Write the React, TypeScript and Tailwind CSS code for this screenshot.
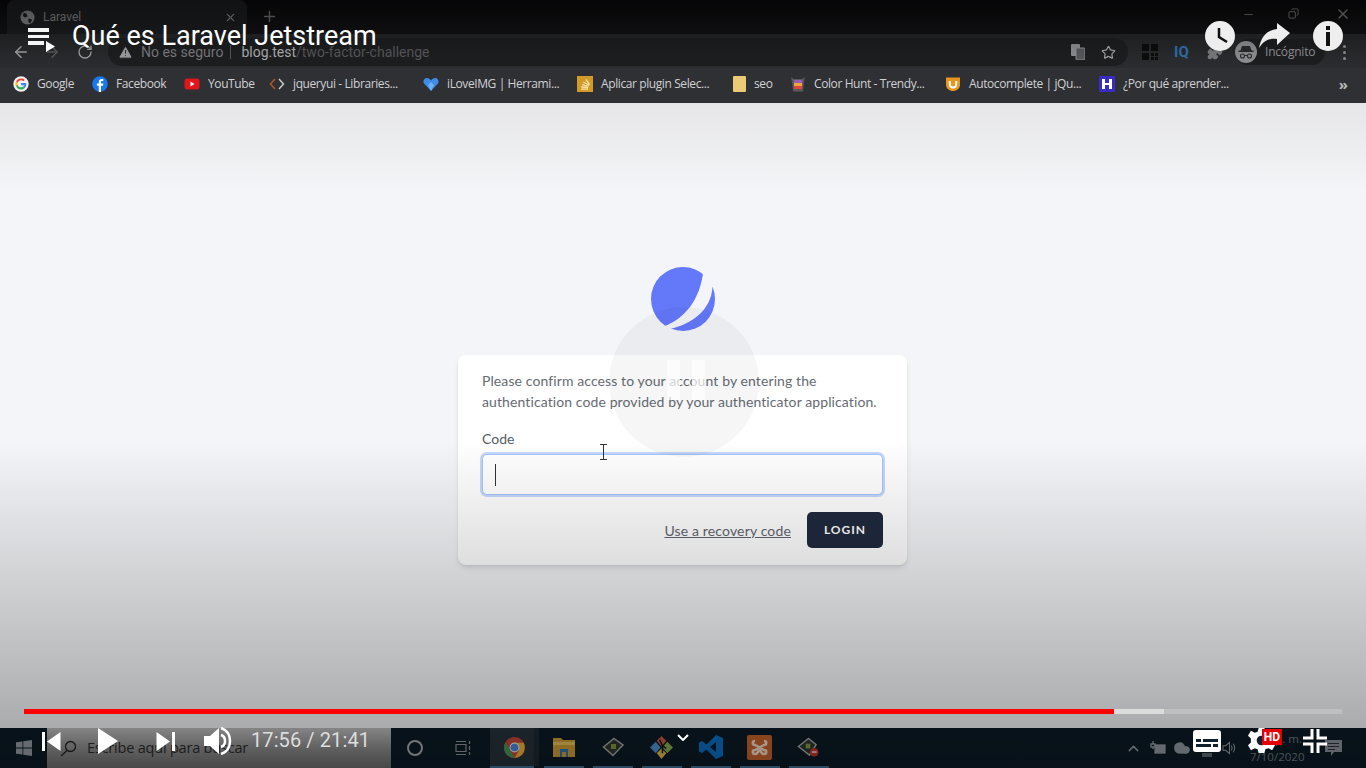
import { ArrowLeft, ArrowRight, RotateCw, Star, TriangleAlert, X, Plus, Minus, Copy, Puzzle, ChevronUp, Cloud } from 'lucide-react'

const bookmarks = [
  { label: 'Google', width: 'w-[39px]', gap: 'mr-4', icon: <GoogleIcon /> },
  { label: 'Facebook', width: 'w-[52px]', gap: 'mr-4', icon: <FacebookIcon /> },
  { label: 'YouTube', width: 'w-[46px]', gap: 'mr-[15px]', icon: <YoutubeIcon /> },
  { label: 'jqueryui - Libraries...', width: 'w-[108px]', gap: 'mr-[22px]', icon: <CodeIcon /> },
  { label: 'iLoveIMG | Herrami...', width: 'w-[110px]', gap: 'mr-5', icon: <HeartIcon /> },
  { label: 'Aplicar plugin Selec...', width: 'w-[114px]', gap: 'mr-[18px]', icon: <StackIcon /> },
  { label: 'seo', width: 'w-[19px]', gap: 'mr-[17px]', icon: <FolderIcon /> },
  { label: 'Color Hunt - Trendy...', width: 'w-[114px]', gap: 'mr-[17px]', icon: <HuntIcon /> },
  { label: 'Autocomplete | jQu...', width: 'w-[113px]', gap: 'mr-[17px]', icon: <ShieldIcon /> },
  { label: '¿Por qué aprender...', width: 'w-[106px]', gap: '', icon: <PurpleIcon /> },
]

function GoogleIcon() {
  return (
    <svg viewBox="0 0 48 48" className="w-4 h-4 shrink-0">
      <circle cx="24" cy="24" r="23" fill="#f1f1f1" />
      <path fill="#ea4335" d="M24 13c3 0 5.400 1 7.300 2.800l4-4C32.700 9 28.800 7.500 24 7.500c-6.500 0-12 3.700-14.700 9.100l4.700 3.600C15.300 16 19.300 13 24 13z" />
      <path fill="#4285f4" d="M39.800 24.400c0-1.200-.1-2.300-.3-3.400H24v6.500h8.900c-.4 2-1.500 3.800-3.300 5l5 3.900c2.900-2.700 5.200-6.800 5.200-12z" />
      <path fill="#fbbc05" d="M14 27.800c-.4-1.200-.6-2.500-.6-3.800s.2-2.600.6-3.800l-4.700-3.600C8.400 18.800 7.500 21.300 7.500 24s.9 5.200 1.800 7.400z" />
      <path fill="#34a853" d="M24 40.500c4.500 0 8.200-1.500 10.600-4.100l-5-3.900c-1.400.9-3.200 1.500-5.600 1.500-4.700 0-8.700-3-10-7.200l-4.700 3.600C12 36 17.500 40.500 24 40.500z" />
    </svg>
  )
}

function FacebookIcon() {
  return (
    <svg viewBox="0 0 16 16" className="w-4 h-4 shrink-0">
      <circle cx="8" cy="8" r="7.800" fill="#1877f2" />
      <path fill="#fff" d="M9 16V9.800h2l.3-2.300H9V6.200c0-.7.300-1.100 1.200-1.100h1.100V3.100C11 3 10.300 3 9.700 3 8 3 6.800 4 6.800 5.900v1.600H4.900v2.300h1.900V16z" />
    </svg>
  )
}

function YoutubeIcon() {
  return (
    <svg viewBox="0 0 16 16" className="w-4 h-4 shrink-0">
      <rect x="0.500" y="2.500" width="15" height="11" rx="3" fill="#e0161b" />
      <path fill="#fff" d="M6.500 5.500 10.500 8l-4 2.500z" />
    </svg>
  )
}

function CodeIcon() {
  return (
    <svg viewBox="0 0 16 16" className="w-4 h-4 shrink-0" fill="none" strokeWidth="1.500">
      <path d="M6 3 1.500 8 6 13" stroke="#b5532b" />
      <path d="M10 3l4.500 5-4.500 5" stroke="#c9c9cb" />
    </svg>
  )
}

function HeartIcon() {
  return (
    <svg viewBox="0 0 16 16" className="w-4 h-4 shrink-0">
      <path fill="#3f8be8" d="M8 15 1 7.500C-.3 5.500.8 2 3.800 2 5.600 2 7 3 8 4.500 9 3 10.400 2 12.200 2c3 0 4.100 3.500 2.800 5.500z" />
      <path fill="#6fb0f6" d="M8 15 5 9l3-3 3 3z" />
    </svg>
  )
}

function StackIcon() {
  return (
    <svg viewBox="0 0 16 16" className="w-4 h-4 shrink-0">
      <rect width="16" height="16" fill="#d29a28" />
      <path stroke="#f7e2a8" strokeWidth="1.300" fill="none" d="M4 13.200h7M4.300 11l6.800.6M5 8.700l6.500 1.700M6.400 6l5.700 3.200M9 3.500l3.700 5.200" />
    </svg>
  )
}

function FolderIcon() {
  return <div className="w-[13px] h-[16px] shrink-0 bg-[#ecc976] rounded-[1px]" />
}

function HuntIcon() {
  return (
    <svg viewBox="0 0 16 16" className="w-4 h-4 shrink-0">
      <path fill="#5a5a5e" d="M1 1l2.500 2h9L15 1l-1 5-1 9.500H3L2 6z" />
      <rect x="4" y="4" width="8" height="3" fill="#9a5fb0" />
      <rect x="4" y="7" width="8" height="3" fill="#f2a33a" />
      <rect x="4" y="10" width="8" height="3" fill="#e0483e" />
    </svg>
  )
}

function ShieldIcon() {
  return (
    <svg viewBox="0 0 16 16" className="w-4 h-4 shrink-0">
      <path fill="#e8951e" d="M1 1.500h14V9c0 3.500-3.500 6-7 6S1 12.500 1 9z" />
      <path stroke="#fff" strokeWidth="2" fill="none" d="M4.800 5v3.500c0 1.800 1.400 3 3.200 3s3.200-1.200 3.200-3V5" />
    </svg>
  )
}

function PurpleIcon() {
  return (
    <svg viewBox="0 0 16 16" className="w-4 h-4 shrink-0">
      <rect width="16" height="16" rx="1" fill="#3a2bc4" />
      <path fill="#fff" d="M3 3h3v4h4V3h3v10h-3V9H6v4H3z" />
    </svg>
  )
}

function BrandLogo() {
  return (
    <svg viewBox="0 0 64 64" className="w-16 h-16">
      <circle cx="32" cy="32" r="32" fill="#6478fa" />
      <path fill="#f4f5f8" d="M53 0 66 18 61.500 20C60 44 40 57 20 61.700L19 66 10 60 14.500 58.800C28 53 47 40 52 6.700z" />
    </svg>
  )
}

function TaskApp({ active, children }: { active?: boolean; children: React.ReactNode }) {
  return (
    <div className="w-[49px] flex flex-col items-center">
      <div className={`w-full flex-1 flex items-center justify-center ${active ? 'bg-[linear-gradient(90deg,#27333c_90%,#1d2932_90%)]' : ''}`}>{children}</div>
      <div className={`h-[2px] ${active ? 'w-[44px] self-start' : 'w-[40px]'} bg-[#3f6e94]`} />
    </div>
  )
}

function Taskbar() {
  return (
    <div className="h-10 shrink-0 flex items-stretch bg-[#0c1a25] text-[#c9cdd1]">
      <div className="w-[47px] flex items-center justify-center">
        <svg viewBox="0 0 16 16" className="w-4 h-4 opacity-70" fill="#d0d4d8">
          <path d="M0 2.300 6.500 1.400v6.200H0zM7.300 1.300 16 0v7.600H7.300zM0 8.400h6.500v6.200L0 13.700zM7.300 8.400H16V16l-8.700-1.300z" />
        </svg>
      </div>
      <div className="w-[344px] flex items-center pl-[13px] gap-[10px] bg-[linear-gradient(#bdbdbd,#8a8a8a_55%,#6e6e6e)]">
        <svg viewBox="0 0 17 17" className="w-[17px] h-[17px]" fill="none" stroke="#222" strokeWidth="1.300">
          <circle cx="10.500" cy="6.500" r="5" />
          <path d="M7 10.500 1 16" />
        </svg>
        <span className="text-[14.500px] font-[Open_Sans,sans-serif] tracking-[-0.200px] text-[#2b2b2b]">Escribe aquí para buscar</span>
      </div>
      <div className="w-[99px] flex items-center pl-[16px] gap-[32px]">
        <div className="w-[16px] h-[16px] rounded-full border-2 border-[#a8adb1]" />
        <svg viewBox="0 0 17 16" className="w-[17px] h-4" fill="none" stroke="#8f969b" strokeWidth="1.200">
          <path d="M1 4.500h10v7H1zM1 1.500h10M1 14.500h10M14.500 1v3M14.500 6v4M14.500 12v3" />
        </svg>
      </div>
      <TaskApp active>
        <svg viewBox="0 0 24 24" className="w-[23px] h-[23px] -ml-[1px]">
          <circle cx="12" cy="12" r="11" fill="#c9443a" />
          <path fill="#3f9a57" d="M2.500 6.500 8 16l4 7a11 11 0 0 1-9.500-16.500z" />
          <path fill="#e9b43c" d="M12 7h9.500A11 11 0 0 1 12 23l5-8.500z" />
          <circle cx="12" cy="12" r="5.200" fill="#e4e4e4" />
          <circle cx="12" cy="12" r="4" fill="#4a86dd" />
        </svg>
      </TaskApp>
      <TaskApp>
        <svg viewBox="0 0 22 20" className="w-[22px] h-[20px]">
          <path fill="#cf9d34" d="M0 1h8l2 2h12v17H0z" />
          <path fill="#e6c25c" d="M0 5h22v3H0z" />
          <rect x="7" y="12" width="8" height="8" fill="#2a76b8" />
          <rect x="9" y="15" width="4" height="5" fill="#cf9d34" />
        </svg>
      </TaskApp>
      <TaskApp>
        <svg viewBox="0 0 22 20" className="w-[22px] h-[20px]">
          <path fill="#2e352f" stroke="#a4a8a2" strokeWidth="1.500" d="M12 1.500 21 8 11 18.500 1.500 10z" />
          <rect x="9" y="7" width="5" height="5" fill="#7f9640" />
        </svg>
      </TaskApp>
      <TaskApp>
        <svg viewBox="0 0 24 24" className="w-[23px] h-[23px]">
          <path fill="#c9564a" d="M12 0l5 5-5 6-5-6z" />
          <path fill="#4f8fd0" d="M6 6l5 6-5 6-6-6z" />
          <path fill="#84ad50" d="M18 6l6 6-6 6-5-6z" />
          <path fill="#e0b84a" d="M12 13l5 5-5 6-5-6z" />
          <path fill="none" stroke="#111" strokeWidth="1.500" d="M10 4l3 6v8M13 10l4 3" />
        </svg>
      </TaskApp>
      <TaskApp>
        <svg viewBox="0 0 24 24" className="w-[24px] h-[24px]">
          <path fill="#0a6fc2" d="M17 0l7 3v18l-7 3-9.500-9.500L3 18l-3-1.500v-9L3 6l4.500 3.500z" />
          <path fill="#0c1a25" d="M17 7 11 12l6 5z" />
        </svg>
      </TaskApp>
      <TaskApp>
        <svg viewBox="0 0 25 25" className="w-[25px] h-[25px]">
          <rect width="25" height="25" rx="2" fill="#c7622c" />
          <path fill="none" stroke="#f2dcc8" strokeWidth="2.500" d="M8 6c-3 0-3 4 0 4l9 5c3 0 3 4 0 4s-3-3-4.500-4.500M17 6c3 0 3 4 0 4l-9 5c-3 0-3 4 0 4s3-3 4.500-4.500" />
        </svg>
      </TaskApp>
      <TaskApp>
        <svg viewBox="0 0 24 22" className="w-[23px] h-[21px]">
          <path fill="#2e352f" stroke="#a4a8a2" strokeWidth="1.500" d="M12 1.500 20 8 13 19 1.500 10z" />
          <rect x="9" y="7" width="5" height="5" fill="#7f9640" />
          <circle cx="18" cy="16" r="4.500" fill="#c2332e" />
          <rect x="15.500" y="15" width="5" height="1.500" fill="#eee" />
        </svg>
      </TaskApp>
      <div className="flex-1 flex items-center justify-end pr-[24px] text-[#929ba2]">
        <ChevronUp className="w-[17px] h-[17px]" />
        <svg viewBox="0 0 16 14" className="ml-[8px] w-[16px] h-[14px]" fill="none" stroke="#929ba2" strokeWidth="1.300">
          <path d="M3 0v3M1 3h4v3H1zM3 6v2" />
          <rect x="5" y="4" width="10" height="8" fill="#929ba2" />
        </svg>
        <Cloud className="ml-[7px] w-[18px] h-[18px]" fill="#929ba2" strokeWidth={1} />
        <div className="ml-[11px] w-[10px] h-[4px] mt-[14px] bg-[#5e6a72]" />
        <svg viewBox="0 0 16 16" className="ml-[10px] w-[15px] h-[16px]" fill="none" stroke="#929ba2" strokeWidth="1.100">
          <path d="M1 5.500h3l4-3.500v12l-4-3.500H1zM10 5.500c1 1.500 1 3.500 0 5M12 3.500c2 2.500 2 6.500 0 9" />
        </svg>
        <div className="ml-[13px] w-[52px] text-right whitespace-nowrap text-[11.500px] font-[Open_Sans,sans-serif] leading-[18px] text-[#707a82]">
          <div>p. m.</div>
          <div>7/10/2020</div>
        </div>
        <svg viewBox="0 0 17 16" className="ml-[23px] w-[17px] h-[16px]">
          <path fill="#8a9299" d="M0 0h17v12H9l-3 4v-4H0z" />
          <path stroke="#2a343c" fill="none" d="M3 3.500h11M3 6.500h11M3 9.500h7" />
        </svg>
      </div>
    </div>
  )
}

function PlayerOverlay() {
  return (
    <>
      <div className="absolute inset-x-0 top-0 h-[60px] bg-[linear-gradient(rgba(0,0,0,0.350),rgba(0,0,0,0))] pointer-events-none" />
      <div className="absolute left-0 right-0 bottom-0 h-[328px] bg-[linear-gradient(rgba(0,0,0,0),rgba(0,0,0,0.340))] pointer-events-none" />

      <div className="absolute left-[28px] top-[28px] w-[21px] flex flex-col gap-[3px]">
        <div className="h-[3.500px] bg-[#f4f4f4]" />
        <div className="h-[3.500px] bg-[#f4f4f4]" />
        <div className="h-[3.500px] w-[16px] bg-[#f4f4f4]" />
      </div>
      <svg viewBox="0 0 10 11" className="absolute left-[45px] top-[41px] w-[10px] h-[11px]">
        <path fill="#fff" d="M1 0l9 5.500L1 11z" />
      </svg>
      <div className="absolute left-[72px] top-[20px] text-[27px] leading-[33px] text-white font-[Roboto,sans-serif]">Qué es Laravel Jetstream</div>

      <div className="absolute left-[1205px] top-[21px] w-[30px] h-[30px] rounded-full bg-[#eeeeee]">
        <svg viewBox="0 0 30 30" className="w-[30px] h-[30px]" fill="none" stroke="#111" strokeWidth="2.500">
          <path d="M14 7v9l8 5" />
        </svg>
      </div>
      <svg viewBox="0 0 32 30" className="absolute left-[1258px] top-[21px] w-[32px] h-[30px]">
        <path fill="#eee" d="M19 2 32 12 19 24v-6C10 17 5 20 1 27 3 16 9 9 19 8z" />
      </svg>
      <div className="absolute left-[1313px] top-[21px] w-[30px] h-[30px] rounded-full bg-[#eeeeee] flex flex-col items-center justify-center gap-[2px]">
        <div className="w-[4px] h-[4px] bg-[#111]" />
        <div className="w-[4px] h-[14px] bg-[#111]" />
      </div>

      <div className="absolute left-[609px] top-[307px] w-[150px] h-[150px] rounded-full bg-[rgba(0,0,0,0.035)] flex items-center justify-center gap-[12px] pl-[4px] pb-[4px]">
        <div className="w-[13px] h-[40px] bg-white/70" />
        <div className="w-[13px] h-[40px] bg-white/70" />
      </div>

      <div className="absolute left-[602px] top-[444px] w-[3px] h-[16px] flex flex-col items-center justify-between">
        <div className="w-[7px] h-[1px] bg-[#333] shrink-0" />
        <div className="w-[1px] flex-1 bg-[#333]" />
        <div className="w-[7px] h-[1px] bg-[#333] shrink-0" />
      </div>

      <div className="absolute left-[24px] right-[24px] top-[709px] h-[5px] flex bg-white/20">
        <div className="w-[1090px] bg-[#ff0000]" />
        <div className="w-[50px] bg-[#dcdcdc]" />
      </div>

      <svg viewBox="0 0 19 19" className="absolute left-[42px] top-[732px] w-[19px] h-[19px]">
        <path fill="#fff" d="M0 0h3v19H0zM18.500 0v19L5 9.500z" />
      </svg>
      <svg viewBox="0 0 20 26" className="absolute left-[98px] top-[728px] w-[20px] h-[26px]">
        <path fill="#fff" d="M0 0l20 13L0 26z" />
      </svg>
      <svg viewBox="0 0 19 19" className="absolute left-[156px] top-[732px] w-[19px] h-[19px]">
        <path fill="#fff" d="M16 0h3v19h-3zM.5 0v19L14 9.500z" />
      </svg>
      <svg viewBox="0 0 28 28" className="absolute left-[204px] top-[727px] w-[28px] h-[28px]">
        <path fill="#fff" d="M0 9h6l9-8v26l-9-8H0z" />
        <path fill="none" stroke="#fff" strokeWidth="2.500" d="M17 1c6 2 9 7 9 13s-3 11-9 13M17 8c3 1 4 3 4 6s-1 5-4 6" />
      </svg>
      <div className="absolute left-[251px] top-[727px] text-[20px] leading-[26px] text-[#dddddd] font-[Roboto,sans-serif] tracking-[0.100px]">17:56 / 21:41</div>
      <svg viewBox="0 0 12 7" className="absolute left-[677px] top-[734px] w-[12px] h-[7px]" fill="none" stroke="#fff" strokeWidth="2">
        <path d="M1 1l5 5 5-5" />
      </svg>

      <svg viewBox="0 0 28 22" className="absolute left-[1193px] top-[730px] w-[28px] h-[22px]">
        <rect width="28" height="22" rx="3" fill="#fff" />
        <path fill="#10202c" d="M3 9h5v3H3zM10 9h15v3H10zM3 14h15v3H3zM20 14h5v3h-5z" />
      </svg>
      <svg viewBox="0 0 28 28" className="absolute left-[1248px] top-[727px] w-[27px] h-[27px]">
        <path fill="#fff" d="M11 1h6l1 4 3 1 4-2 3 5-3 3v4l3 3-3 5-4-2-3 1-1 4h-6l-1-4-3-1-4 2-3-5 3-3v-4L0 9l3-5 4 2 3-1z" />
        <circle cx="14" cy="14" r="5" fill="#10202c" />
      </svg>
      <div className="absolute left-[1262px] top-[729px] w-[20px] h-[16px] bg-[#e60000] text-white text-[12px] leading-[16px] font-bold text-center font-[Roboto,sans-serif]">HD</div>
      <svg viewBox="0 0 24 24" className="absolute left-[1303px] top-[729px] w-[24px] h-[24px]" fill="none" stroke="#fff" strokeWidth="3">
        <path d="M9 0v9H0M15 0v9h9M9 24v-9H0M15 24v-9h9" />
      </svg>
    </>
  )
}

export default function App() {
  return (
    <div className="relative w-[1366px] h-[768px] overflow-hidden flex flex-col font-[Roboto,sans-serif]">
      {/* chrome tab strip */}
      <div className="h-[34px] shrink-0 flex items-end bg-[linear-gradient(#08080a,#121214)] text-[#8c8d90]">
        <div className="ml-[7px] w-[240px] h-[34px] rounded-t-[8px] bg-[#1a1b1d] flex items-center pl-[13px] pr-[10px]">
          <svg viewBox="0 0 16 16" className="w-[15px] h-[15px]">
            <circle cx="8" cy="8" r="7.500" fill="#77787b" />
            <path fill="#1a1b1d" d="M4 3l3 1 1 3-3 1-2-2zM9 9l4 1-2 4-2-1z" />
          </svg>
          <span className="ml-[8px] flex-1 text-[12px] text-[#77787b]">Laravel</span>
          <X className="w-[13px] h-[13px] text-[#77787b]" />
        </div>
        <Plus className="w-[17px] h-[17px] ml-[14px] mb-[9px] text-[#66676a]" />
        <div className="flex-1" />
        <Minus className="w-[13px] h-[13px] mb-[13px] mr-[33px] text-[#5e5f62]" />
        <Copy className="w-[11px] h-[11px] mb-[15px] mr-[36px] text-[#6d6e71] -scale-x-100" />
        <X className="w-[16px] h-[16px] mb-[12px] mr-[15px] text-[#6d6e71]" />
      </div>

      {/* toolbar */}
      <div className="h-[34px] pt-[2px] shrink-0 flex items-center bg-[linear-gradient(#232426,#2b2c2f)] text-[#9c9da0]">
        <ArrowLeft className="w-[18px] h-[18px] ml-[12px]" />
        <ArrowRight className="w-[18px] h-[18px] ml-[13px] text-[#55565a]" />
        <RotateCw className="w-[16px] h-[16px] ml-[16px]" />
        <div className="ml-[15px] w-[1020px] h-[28px] rounded-full bg-[#1c1d1f] flex items-center pl-[10px] pr-[12px]">
          <TriangleAlert className="w-[15px] h-[15px] text-[#9a9b9e]" fill="#9a9b9e" stroke="#1c1d1f" strokeWidth={1.500} />
          <span className="ml-[8px] text-[14px] text-[#77787b]">No es seguro</span>
          <div className="ml-[7px] w-[1px] h-[14px] bg-[#55565a]" />
          <span className="ml-[10px] text-[14px] text-[#a8a9ac]">blog.test</span>
          <span className="text-[14px] text-[#55565a]">/two-factor-challenge</span>
          <div className="flex-1" />
          <svg viewBox="0 0 14 16" className="w-[14px] h-[16px] mr-[16px]">
            <rect x="0" y="0" width="9" height="12" rx="1" fill="#8a8b8e" />
            <rect x="5" y="4" width="9" height="12" rx="1" fill="#55565a" stroke="#8a8b8e" />
          </svg>
          <Star className="w-[15px] h-[15px]" />
        </div>
        <svg viewBox="0 0 16 16" className="ml-[14px] w-[16px] h-[16px]" fill="#0c0c0d">
          <path d="M0 0h7v7H0zM9 0h7v7H9zM0 9h7v7H0zM9 9h3v3H9zM13 9h3v3h-3zM9 13h3v3H9zM13 13h3v3h-3z" />
        </svg>
        <span className="ml-[16px] w-[14px] text-[15px] font-bold text-[#2f6ea8]">IQ</span>
        <Puzzle className="ml-[19px] w-[16px] h-[16px] text-[#77787b]" fill="#77787b" />
        <div className="ml-[12px] w-[90px] h-[26px] rounded-full bg-[#1c1d1f] flex items-center">
          <svg viewBox="0 0 22 22" className="w-[22px] h-[22px]">
            <circle cx="11" cy="11" r="11" fill="#8a8b8e" />
            <path fill="#2a2a2c" d="M7 5h8l1.500 4.500h2V11h-15V9.500h2z" />
            <path fill="none" stroke="#2a2a2c" strokeWidth="1.100" d="M9.500 15a2 2 0 1 1-4 0 2 2 0 0 1 4 0zM16.500 15a2 2 0 1 1-4 0 2 2 0 0 1 4 0zM9.500 14.500h3" />
          </svg>
          <span className="ml-[8px] text-[12px] text-[#8f9093] font-[Open_Sans,sans-serif] tracking-[-0.200px]">Incógnito</span>
        </div>
        <div className="ml-[18px] flex flex-col gap-[3px]">
          <div className="w-[3px] h-[3px] rounded-full bg-[#8a8b8e]" />
          <div className="w-[3px] h-[3px] rounded-full bg-[#8a8b8e]" />
          <div className="w-[3px] h-[3px] rounded-full bg-[#8a8b8e]" />
        </div>
      </div>

      {/* bookmarks */}
      <div className="h-[35px] pb-[3px] shrink-0 flex items-center bg-[#2f3033] pl-[13px] text-[#d0d1d3] text-[12px] font-[Open_Sans,sans-serif]">
        {bookmarks.map((b) => (
          <div key={b.label} className={`flex items-center gap-[8px] ${b.gap}`}>
            {b.icon}
            <span className={`${b.width} whitespace-nowrap tracking-[-0.400px]`}>{b.label}</span>
          </div>
        ))}
        <div className="flex-1" />
        <span className="mr-[18px] text-[#b8b9bb] text-[15px] font-bold leading-none">»</span>
      </div>

      {/* page */}
      <div className="flex-1 flex flex-col items-center pr-[1px] pt-[164px] bg-[linear-gradient(#e6e6e8,#f4f5f8_90px)]">
        <BrandLogo />
        <div className="mt-[24px] w-[449px] h-[210px] bg-white rounded-[8px] shadow-md px-[24px] pt-[15px] font-[Lato,sans-serif] text-[#666b73]">
          <p className="text-[14px] leading-[21px] tracking-[0.100px]">
            Please confirm access to your account by entering the<br />
            authentication code provided by your authenticator application.
          </p>
          <label className="block mt-[16px] text-[14px] leading-[21px] text-[#555b68]">Code</label>
          <div className="mt-[5px] h-[41px] rounded-[5px] border border-[#a4c4fa] ring-2 ring-[#c4d8fb] bg-white flex items-center pl-[12px]">
            <div className="w-[1px] h-[22px] bg-[#333]" />
          </div>
          <div className="mt-[17px] flex items-center justify-end">
            <a className="text-[14px] underline text-[#5f6670] tracking-[0.150px]">Use a recovery code</a>
            <button className="ml-[16px] w-[76px] h-[36px] rounded-[5px] bg-[#1f2a3e] text-white text-[12px] font-bold tracking-[1px]">LOGIN</button>
          </div>
        </div>
      </div>

      <Taskbar />
      <PlayerOverlay />
    </div>
  )
}
